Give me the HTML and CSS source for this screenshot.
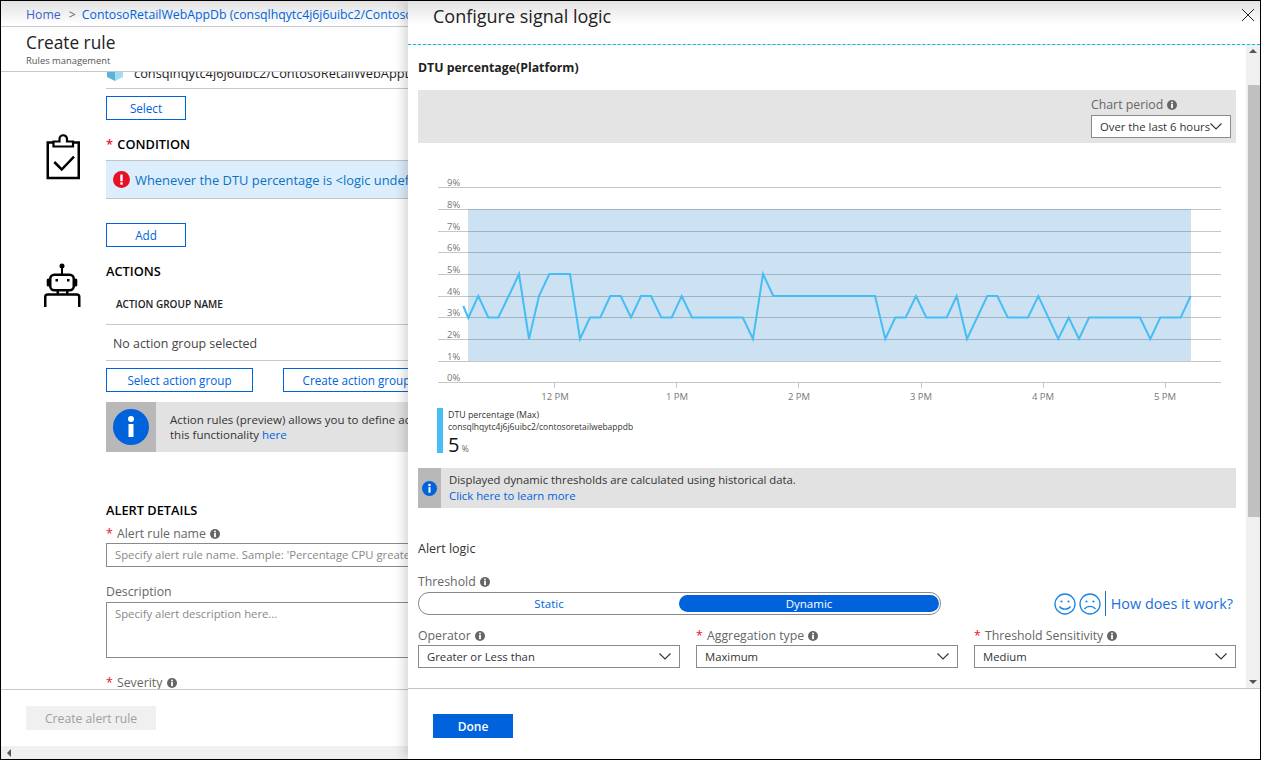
FILE: index.html
```html
<!DOCTYPE html>
<html lang="en">
  <head>
    <meta charset="UTF-8" />
    <title>Configure signal logic</title>
    <link rel="stylesheet" href="styles.css">
  </head>
  <body>
    <svg class="defs" width="0" height="0" aria-hidden="true">
      <symbol id="tip" viewBox="0 0 12 12">
        <circle cx="6" cy="6" r="5" fill="#666" />
        <rect x="5.100" y="5" width="1.800" height="4.200" fill="#fff" />
        <rect x="5.100" y="2.700" width="1.800" height="1.600" fill="#fff" />
      </symbol>
      <symbol id="chev" viewBox="0 0 12 7">
        <polyline points="0.500,0.500 6,6 11.500,0.500" fill="none" stroke="#333" stroke-width="1.100" />
      </symbol>
    </svg>

    <div class="frame">
      <!-- Create rule blade (behind) -->
      <div class="blade">
        <div class="crumbs">
          <a class="visited">Home</a>
          <span class="sep">&gt;</span>
          <a>ContosoRetailWebAppDb (consqlhqytc4j6j6uibc2/ContosoRetailWebAppDb)</a>
        </div>
        <div class="blade-head">
          <h1>Create rule</h1>
          <div class="sub">Rules management</div>
        </div>

        <div class="blade-scroll">
          <div class="sect">
            <div class="sect-icon"></div>
            <div class="sect-body">
              <div class="res-row">
                <svg class="cube" width="18" height="18" viewBox="0 0 18 18">
                  <polygon points="1,5 9,9 9,18 1,14" fill="#59b4d9" />
                  <polygon points="17,5 9,9 9,18 17,14" fill="#a5dcf3" />
                </svg>
                <span>consqlhqytc4j6j6uibc2/ContosoRetailWebAppDb</span>
              </div>
              <button class="btn btn-small btn-first">Select</button>
            </div>
          </div>

          <div class="sect">
            <div class="sect-icon">
              <svg class="clip-icon" width="36" height="46" viewBox="0 0 36 46">
                <path d="M7.500 8.500H1.750v35.500h31V8.500H27" fill="none" stroke="#000" stroke-width="2.500" />
                <path d="M7.500 12.500h19.500V7.500h-6V5a3.300 3.300 0 0 0-7.500 0v2.500h-6z" fill="#fff" stroke="#000" stroke-width="2.200" />
                <polyline points="8.300,28 15.700,35.500 28,22.700" fill="none" stroke="#000" stroke-width="2.500" />
              </svg>
            </div>
            <div class="sect-body">
              <h2 class="sect-title"><span class="req">*</span> CONDITION</h2>
              <div class="cond-bar">
                <svg width="17" height="17" viewBox="0 0 17 17">
                  <circle cx="8.500" cy="8.500" r="8.500" fill="#e81123" />
                  <rect x="7.300" y="3.500" width="2.400" height="6.800" fill="#fff" />
                  <rect x="7.300" y="11.300" width="2.400" height="2.400" fill="#fff" />
                </svg>
                <a>Whenever the DTU percentage is &lt;logic undefined&gt;</a>
              </div>
              <button class="btn btn-small btn-add">Add</button>
            </div>
          </div>

          <div class="sect">
            <div class="sect-icon">
              <svg class="bot-icon" width="38" height="47" viewBox="0 0 38 47">
                <circle cx="19" cy="5" r="2.500" fill="#000" />
                <rect x="18" y="6" width="2" height="7" fill="#000" />
                <rect x="7.250" y="13.750" width="23.500" height="15.500" rx="4" fill="none" stroke="#000" stroke-width="2.500" />
                <rect x="3.700" y="17.500" width="3" height="8" rx="1.500" fill="#000" />
                <rect x="31.300" y="17.500" width="3" height="8" rx="1.500" fill="#000" />
                <rect x="12.500" y="18" width="2.500" height="2.500" fill="#000" />
                <rect x="24" y="18" width="2.500" height="2.500" fill="#000" />
                <rect x="13.500" y="30" width="2.500" height="3" fill="#000" />
                <rect x="23" y="30" width="2.500" height="3" fill="#000" />
                <path d="M2.250 46V36a2.500 2.500 0 0 1 2.500-2.500h29a2.500 2.500 0 0 1 2.500 2.500v10" fill="none" stroke="#000" stroke-width="2.500" />
              </svg>
            </div>
            <div class="sect-body">
              <h2 class="sect-title">ACTIONS</h2>
              <div class="tbl-head">ACTION GROUP NAME</div>
              <div class="tbl-row">No action group selected</div>
              <div class="btn-row">
                <button class="btn btn-wide">Select action group</button>
                <button class="btn btn-wide">Create action group</button>
              </div>
              <div class="note note-large">
                <div class="note-icon">
                  <svg width="36" height="36" viewBox="0 0 36 36">
                    <circle cx="18" cy="18" r="18" fill="#0063dc" />
                    <rect x="15.500" y="15" width="5" height="13" fill="#fff" />
                    <circle cx="18" cy="10" r="3" fill="#fff" />
                  </svg>
                </div>
                <div class="note-text">
                  Action rules (preview) allows you to define actions at scale. Learn more about<br />
                  this functionality <a>here</a>
                </div>
              </div>

              <h2 class="sect-title details-title">ALERT DETAILS</h2>
              <label class="field-label name-label"><span class="req">*</span> Alert rule name <svg class="tip"><use href="#tip" /></svg></label>
              <div class="input input-line">Specify alert rule name. Sample: 'Percentage CPU greater than 70'</div>
              <label class="field-label desc-label">Description</label>
              <div class="input input-area">Specify alert description here...</div>
              <label class="field-label sev-label"><span class="req">*</span> Severity <svg class="tip"><use href="#tip" /></svg></label>
            </div>
          </div>
        </div>

        <div class="blade-foot">
          <button class="btn-disabled">Create alert rule</button>
        </div>
        <div class="hscroll"><span class="arrow-left"></span></div>
      </div>

      <!-- Configure signal logic panel -->
      <div class="panel">
        <div class="panel-head">
          <h1>Configure signal logic</h1>
          <svg class="close" width="12" height="12" viewBox="0 0 12 12">
            <path d="M0 0L12 12M12 0L0 12" stroke="#222" stroke-width="1" />
          </svg>
        </div>

        <div class="panel-mid">
          <div class="panel-body">
            <h3>DTU percentage(Platform)</h3>

            <div class="period-band">
              <div class="period">
                <label class="field-label">Chart period <svg class="tip"><use href="#tip" /></svg></label>
                <div class="select select-period">Over the last 6 hours<svg class="chev"><use href="#chev" /></svg></div>
              </div>
            </div>

            <svg class="chart" width="818" height="265" viewBox="418 143 818 265">
              <g stroke="#c6c6c6" stroke-width="1">
                <line x1="438" x2="1221" y1="187.500" y2="187.500" />
                <line x1="438" x2="1221" y1="209.500" y2="209.500" />
                <line x1="438" x2="1221" y1="231.500" y2="231.500" />
                <line x1="438" x2="1221" y1="252.500" y2="252.500" />
                <line x1="438" x2="1221" y1="274.500" y2="274.500" />
                <line x1="438" x2="1221" y1="296.500" y2="296.500" />
                <line x1="438" x2="1221" y1="317.500" y2="317.500" />
                <line x1="438" x2="1221" y1="339.500" y2="339.500" />
                <line x1="438" x2="1221" y1="361.500" y2="361.500" />
                <line x1="438" x2="1221" y1="382.500" y2="382.500" />
                <line x1="554.500" x2="554.500" y1="383" y2="388" />
                <line x1="676.500" x2="676.500" y1="383" y2="388" />
                <line x1="798.500" x2="798.500" y1="383" y2="388" />
                <line x1="921.500" x2="921.500" y1="383" y2="388" />
                <line x1="1043.500" x2="1043.500" y1="383" y2="388" />
                <line x1="1165.500" x2="1165.500" y1="383" y2="388" />
              </g>
              <rect x="468" y="209" width="723" height="152" fill="rgba(0, 110, 190, 0.2)" />
              <polyline fill="none" stroke="#47bdf5" stroke-width="2"
                points="463.300,306 468.300,318 478.300,296 488.300,317.500 498.300,317.500 508.700,296 519,274 529,339 539,296 549.300,274 570,274 580,339 590,317.500 600.300,317.500 610.300,296 620.700,296 631,317.500 641,296 651,296 661.300,317.500 671.700,317.500 681.700,296 692,317.500 742.700,317.500 753,339 763,274 773.300,296 875,296 885.300,339 895.300,317.500 905.700,317.500 916,296 926.300,317.500 946.700,317.500 956.700,296 967,339 987.300,296 997.300,296 1007.700,317.500 1028,317.500 1038.300,296 1058.300,339 1068.700,317.500 1079,339 1089,317.500 1140,317.500 1150.300,339 1160.300,317.500 1180.700,317.500 1190.700,296" />
              <g class="axis">
                <text x="447" y="186">9%</text>
                <text x="447" y="208">8%</text>
                <text x="447" y="230">7%</text>
                <text x="447" y="251">6%</text>
                <text x="447" y="273">5%</text>
                <text x="447" y="295">4%</text>
                <text x="447" y="316">3%</text>
                <text x="447" y="338">2%</text>
                <text x="447" y="360">1%</text>
                <text x="447" y="381">0%</text>
              </g>
              <g class="axis axis-x">
                <text x="555" y="400">12 PM</text>
                <text x="677" y="400">1 PM</text>
                <text x="799" y="400">2 PM</text>
                <text x="921" y="400">3 PM</text>
                <text x="1043" y="400">4 PM</text>
                <text x="1165" y="400">5 PM</text>
              </g>
            </svg>

            <div class="legend">
              <div class="legend-bar"></div>
              <div class="legend-text">
                <div class="legend-name">DTU percentage (Max)</div>
                <div>consqlhqytc4j6j6uibc2/contosoretailwebappdb</div>
                <div class="legend-val">5 <span>%</span></div>
              </div>
            </div>

            <div class="note note-small">
              <div class="note-icon">
                <svg width="15" height="15" viewBox="0 0 16 16">
                  <circle cx="8" cy="8" r="8" fill="#0063dc" />
                  <rect x="6.900" y="6.500" width="2.200" height="6" fill="#fff" />
                  <circle cx="8" cy="4.300" r="1.400" fill="#fff" />
                </svg>
              </div>
              <div class="note-text">
                Displayed dynamic thresholds are calculated using historical data.<br />
                <a>Click here to learn more</a>
              </div>
            </div>

            <h4>Alert logic</h4>
            <label class="field-label threshold-label">Threshold <svg class="tip"><use href="#tip" /></svg></label>
            <div class="threshold-row">
              <div class="toggle">
                <div class="seg">Static</div>
                <div class="seg seg-on">Dynamic</div>
              </div>
              <div class="feedback">
                <svg width="22" height="22" viewBox="0 0 22 22">
                  <circle cx="11" cy="11" r="10" fill="none" stroke="#1a86e0" stroke-width="1.300" />
                  <circle cx="7.500" cy="8.500" r="1.100" fill="#1a86e0" />
                  <circle cx="14.500" cy="8.500" r="1.100" fill="#1a86e0" />
                  <path d="M5.500 13.500c2.500 3.500 8.500 3.500 11 0" fill="none" stroke="#1a86e0" stroke-width="1.300" />
                </svg>
                <svg width="22" height="22" viewBox="0 0 22 22">
                  <circle cx="11" cy="11" r="10" fill="none" stroke="#1a86e0" stroke-width="1.300" />
                  <circle cx="7.500" cy="8.500" r="1.100" fill="#1a86e0" />
                  <circle cx="14.500" cy="8.500" r="1.100" fill="#1a86e0" />
                  <path d="M5.500 16c2.500-3.500 8.500-3.500 11 0" fill="none" stroke="#1a86e0" stroke-width="1.300" />
                </svg>
                <a>How does it work?</a>
              </div>
            </div>

            <div class="op-grid">
              <div>
                <label class="field-label">Operator <svg class="tip"><use href="#tip" /></svg></label>
                <div class="select">Greater or Less than<svg class="chev"><use href="#chev" /></svg></div>
              </div>
              <div>
                <label class="field-label"><span class="req">*</span> Aggregation type <svg class="tip"><use href="#tip" /></svg></label>
                <div class="select">Maximum<svg class="chev"><use href="#chev" /></svg></div>
              </div>
              <div>
                <label class="field-label"><span class="req">*</span> Threshold Sensitivity <svg class="tip"><use href="#tip" /></svg></label>
                <div class="select">Medium<svg class="chev"><use href="#chev" /></svg></div>
              </div>
            </div>
          </div>

          <div class="vscroll">
            <span class="arrow-up"></span>
            <div class="vthumb"></div>
            <span class="arrow-down"></span>
          </div>
        </div>

        <div class="panel-foot">
          <button class="btn-primary">Done</button>
        </div>
      </div>
    </div>
  </body>
</html>
```

FILE: styles.css
```css
/* Page frame */
body {
  margin: 0;
  background-color: #fff;
  color: #222;
  font-family: "Open Sans", "Noto Sans", sans-serif;
  font-size: 12px;
}

.defs {
  position: absolute;
}

.frame {
  display: flex;
  width: 1261px;
  height: 760px;
  box-sizing: border-box;
  border: 1px solid #000;
  overflow: hidden;
}

a {
  color: #0063dc;
}

.req {
  margin-right: 1px;
  color: #e81123;
}

.tip {
  width: 12px;
  height: 12px;
  vertical-align: -2px;
}

/* Left blade */
.blade {
  display: flex;
  flex-direction: column;
  width: 407px;
  flex-shrink: 0;
  overflow: hidden;
}

.crumbs {
  height: 24px;
  flex-shrink: 0;
  display: flex;
  align-items: center;
  padding: 1px 0 0 25px;
  border-bottom: 1px solid #c8c8c8;
  background: linear-gradient(#e2e2e2, #fff 24px);
  white-space: nowrap;
  font-size: 12.300px;
}

.crumbs .visited {
  color: #3a62c8;
}

.crumbs .sep {
  margin: 0 6px 0 8px;
  color: #666;
}

.blade-head {
  height: 44px;
  flex-shrink: 0;
  padding-left: 25px;
  border-bottom: 1px solid #c8c8c8;
}

.blade-head h1 {
  margin: 4px 0 0;
  font-size: 17.300px;
  font-weight: 400;
  line-height: 24px;
}

.sub {
  font-size: 9.400px;
  line-height: 12px;
  color: #555;
}

.blade-scroll {
  flex: 1;
  min-height: 0;
  overflow: hidden;
}

.sect {
  display: flex;
}

.sect-icon {
  width: 105px;
  flex-shrink: 0;
}

.sect-body {
  width: 760px;
  flex-shrink: 0;
}

.res-row {
  display: flex;
  gap: 10px;
  height: 25px;
  margin-top: -9px;
  border-bottom: 1px solid #c8c8c8;
  font-size: 12.800px;
  line-height: 20px;
  white-space: nowrap;
}

.cube {
  flex-shrink: 0;
}

.btn {
  display: block;
  height: 24px;
  padding: 0;
  background-color: #fff;
  border: 1px solid #0063dc;
  color: #0063dc;
  font-family: inherit;
  font-size: 11.700px;
}

.btn-small {
  width: 80px;
}

.btn-first {
  margin-top: 7px;
}

.btn-add {
  margin-top: 24px;
}

.btn-wide {
  width: 147px;
}

.btn-row {
  display: flex;
  gap: 30px;
  margin-top: 7px;
}

.sect-title {
  margin: 14px 0 0;
  padding-top: 1px;
  font-size: 12.800px;
  font-weight: 600;
  line-height: 19px;
  color: #000;
}

.clip-icon {
  display: block;
  margin: 14px 0 0 45px;
}

.bot-icon {
  display: block;
  margin: 14px 0 0 42px;
}

.cond-bar {
  display: flex;
  align-items: center;
  gap: 5px;
  height: 37px;
  margin-top: 6px;
  padding-left: 7px;
  background-color: #dcedfb;
  border-top: 1px solid #c4c4c4;
  border-bottom: 1px solid #c4c4c4;
  font-size: 12.900px;
  white-space: nowrap;
}

.cond-bar a {
  color: #0a72c8;
}

.tbl-head {
  height: 43px;
  padding-left: 10px;
  border-bottom: 1px solid #c8c8c8;
  font-size: 10px;
  font-weight: 600;
  line-height: 46px;
}

.tbl-row {
  height: 35px;
  padding-left: 7px;
  border-bottom: 1px solid #c8c8c8;
  color: #444;
  font-size: 12.400px;
  line-height: 37px;
}

/* Info notes */
.note {
  display: flex;
  background-color: #e2e2e2;
}

.note-icon {
  display: flex;
  align-items: center;
  justify-content: center;
  flex-shrink: 0;
  background-color: #b8b8b8;
}

.note-text {
  color: #333;
  white-space: nowrap;
}

.note-large {
  height: 50px;
  margin-top: 10px;
}

.note-large .note-icon {
  width: 50px;
}

.note-large .note-text {
  padding: 10px 0 0 14px;
  font-size: 11.500px;
  line-height: 15px;
}

.note-small {
  height: 40px;
  margin-top: 15px;
}

.note-small .note-icon {
  width: 23px;
}

.note-small .note-text {
  padding: 4px 0 0 8px;
  font-size: 11.340px;
  line-height: 16px;
}

.details-title {
  margin-top: 48px;
}

.field-label {
  display: block;
  padding-top: 2px;
  font-size: 12.300px;
  line-height: 18px;
  color: #666;
  white-space: nowrap;
}

.input {
  box-sizing: border-box;
  padding-left: 8px;
  border: 1px solid #8a8a8a;
  color: #888;
  font-size: 11.300px;
  white-space: nowrap;
}

.input-line {
  height: 24px;
  line-height: 22px;
}

.input-area {
  height: 56px;
  margin-top: 1px;
  line-height: 22px;
}

.name-label {
  margin-top: 3px;
}

.desc-label {
  margin-top: 14px;
}

.sev-label {
  margin-top: 14px;
}

/* Left blade footer */
.blade-foot {
  height: 40px;
  flex-shrink: 0;
  padding: 16px 0 0 25px;
  border-top: 1px solid #c8c8c8;
}

.btn-disabled {
  width: 130px;
  height: 24px;
  padding: 0;
  background-color: #f0f0f0;
  border: none;
  color: #a0a0a0;
  font-family: inherit;
  font-size: 12.200px;
}

.hscroll {
  height: 13px;
  flex-shrink: 0;
  background-color: #f0f0f0;
  display: flex;
  align-items: center;
  padding-left: 6px;
}

.arrow-left {
  border: 4px solid transparent;
  border-left-width: 0;
  border-right: 4px solid #555;
}

/* Right panel */
.panel {
  flex: 1;
  min-width: 0;
  display: flex;
  flex-direction: column;
  background-color: #fff;
  box-shadow: -4px 0 10px rgba(0, 0, 0, 0.16);
  z-index: 1;
}

.panel-head {
  height: 43px;
  flex-shrink: 0;
  display: flex;
  justify-content: space-between;
  padding: 0 6px 0 25px;
  border-bottom: 1px dashed #00bcf2;
  background: linear-gradient(#e2e2e2, #fff 24px);
}

.panel-head h1 {
  margin: 2px 0 0;
  font-size: 18px;
  font-weight: 400;
  line-height: 26px;
}

.close {
  margin-top: 8px;
}

.panel-mid {
  flex: 1;
  min-height: 0;
  display: flex;
}

.panel-body {
  width: 818px;
  flex-shrink: 0;
  padding: 0 10px;
  overflow: hidden;
}

.panel-body h3 {
  margin: 13px 0 12px;
  font-size: 12.300px;
  font-weight: 700;
  line-height: 20px;
}

.period-band {
  display: flex;
  justify-content: flex-end;
  height: 53px;
  padding-right: 5px;
  box-sizing: border-box;
  background-color: #e4e4e4;
}

.period {
  width: 140px;
  padding-top: 6px;
}

.period .field-label {
  padding-top: 0;
  margin-bottom: 1px;
}

.select {
  display: flex;
  align-items: center;
  justify-content: space-between;
  box-sizing: border-box;
  height: 23px;
  padding: 0 8px;
  background-color: #fff;
  border: 1px solid #8a8a8a;
  color: #333;
  font-size: 11.300px;
  white-space: nowrap;
}

.chev {
  width: 12px;
  height: 7px;
  flex-shrink: 0;
}

.chart {
  display: block;
}

.axis text {
  fill: #777;
  font-size: 9.500px;
}

.axis-x text {
  text-anchor: middle;
}

/* Chart legend */
.legend {
  display: flex;
  height: 45px;
  margin-left: 19px;
}

.legend-bar {
  width: 6px;
  background-color: #47bdf5;
}

.legend-text {
  margin-left: 5px;
  padding-top: 2px;
  font-size: 8.500px;
  line-height: 11px;
  color: #333;
  white-space: nowrap;
}

.legend-name {
  font-size: 8.800px;
}

.legend-val {
  margin-top: 2px;
  color: #111;
  font-size: 20px;
  line-height: 21px;
}

.legend-val span {
  margin-left: -3px;
  color: #666;
  font-size: 8.500px;
}

/* Alert logic */
.panel-body h4 {
  margin: 30px 0 0;
  padding-top: 2px;
  font-size: 12.500px;
  font-weight: 400;
  line-height: 18px;
  color: #333;
}

.threshold-label {
  margin-top: 13px;
}

.threshold-row {
  display: flex;
  justify-content: space-between;
  align-items: center;
  height: 23px;
  margin-top: 1px;
  padding-right: 3px;
}

.toggle {
  display: flex;
  box-sizing: border-box;
  width: 523px;
  height: 23px;
  padding: 2px 1px 2px 0;
  border: 1px solid #888;
  border-radius: 11px;
}

.seg {
  flex: 1;
  color: #0063dc;
  font-size: 11.500px;
  line-height: 17px;
  text-align: center;
}

.seg-on {
  background-color: #0063dc;
  border-radius: 9px;
  color: #fff;
}

.feedback {
  display: flex;
  align-items: center;
  gap: 3px;
}

.feedback a {
  margin-left: 1px;
  padding-left: 5px;
  border-left: 1px solid #1a6fc0;
  color: #1a6fdc;
  font-size: 14.400px;
  line-height: 25px;
}

.op-grid {
  display: grid;
  grid-template-columns: repeat(3, 262px);
  gap: 16px;
  margin-top: 10px;
}

.panel-foot {
  height: 71px;
  flex-shrink: 0;
  padding: 25px 0 0 25px;
  box-sizing: border-box;
  border-top: 1px solid #c4c4c4;
}

.btn-primary {
  width: 80px;
  height: 24px;
  padding: 0;
  background-color: #0063dc;
  border: none;
  color: #fff;
  font-family: inherit;
  font-size: 12px;
  font-weight: 600;
}

/* Panel scrollbar */
.vscroll {
  position: relative;
  width: 14px;
  flex-shrink: 0;
  background-color: #f0f0f0;
}

.vthumb {
  position: absolute;
  top: 40px;
  right: 0;
  width: 12px;
  height: 432px;
  background-color: #c0c0c0;
}

.arrow-up,
.arrow-down {
  position: absolute;
  right: 3px;
  border: 4px solid transparent;
}

.arrow-up {
  top: 4px;
  border-top-width: 0;
  border-bottom: 4px solid #555;
}

.arrow-down {
  bottom: 4px;
  border-bottom-width: 0;
  border-top: 4px solid #555;
}
```
